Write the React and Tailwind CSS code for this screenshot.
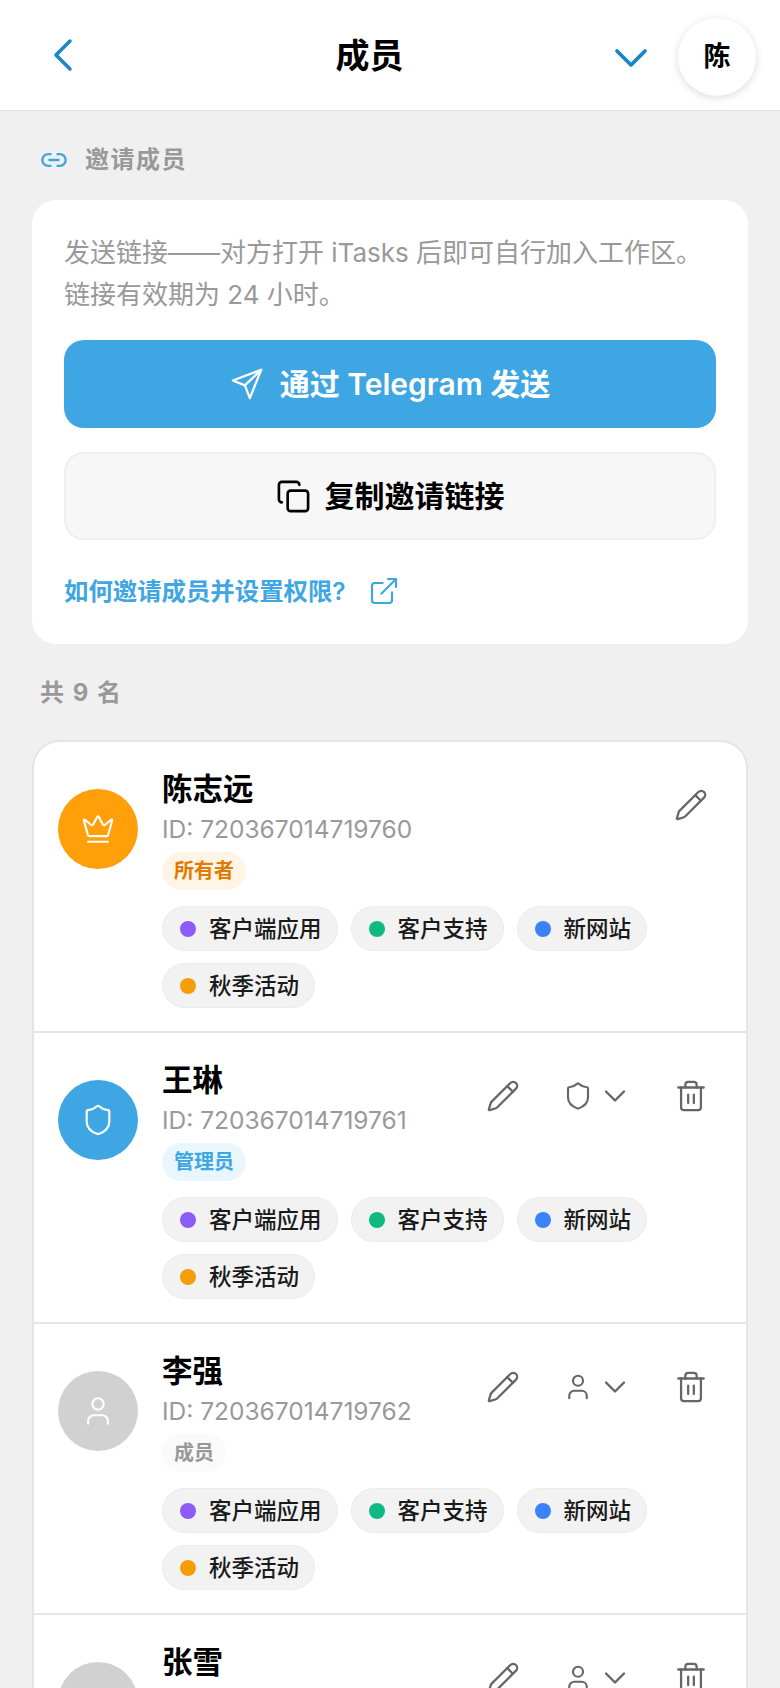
import {
  ChevronDown,
  ChevronLeft,
  Copy,
  Crown,
  ExternalLink,
  Link2,
  Pencil,
  Shield,
  Trash2,
  User,
} from "lucide-react";

const projects = [
  { name: "客户端应用", dot: "bg-[#8b5cf6]" },
  { name: "客户支持", dot: "bg-[#10b981]" },
  { name: "新网站", dot: "bg-[#3b82f6]" },
  { name: "秋季活动", dot: "bg-[#f59e0b]" },
];

const members = [
  { name: "陈志远", id: "720367014719760", role: "owner" },
  { name: "王琳", id: "720367014719761", role: "admin" },
  { name: "李强", id: "720367014719762", role: "member" },
  { name: "张雪", id: "720367014719763", role: "member" },
];

const roleStyles = {
  owner: { label: "所有者", avatar: "bg-[#ff9f0a]", badge: "bg-[#fff4e6] text-[#e07b00]", Icon: Crown },
  admin: { label: "管理员", avatar: "bg-[#3ea6e3]", badge: "bg-[#eaf6fd] text-[#3ea6e3]", Icon: Shield },
  member: { label: "成员", avatar: "bg-[#d1d1d1]", badge: "bg-[#fafafa] text-[#999999]", Icon: User },
};

function PlaneIcon() {
  return (
    <svg width="34" height="34" viewBox="0 0 24 24" fill="none" stroke="currentColor" strokeWidth="1.6" strokeLinejoin="round" strokeLinecap="round">
      <path d="M22 2 2 9.5l8.5 3.5 3.5 9z" />
      <path d="M22 2 10.5 13" />
    </svg>
  );
}

function SectionLabel({ children }) {
  return (
    <div className="flex h-[40px] items-center text-[24px] font-bold tracking-[1.5px] text-[#999999]">
      {children}
    </div>
  );
}

function MemberRow({ member }) {
  const role = roleStyles[member.role];
  const RoleIcon = role.Icon;
  const isOwner = member.role === "owner";

  return (
    <div className="border-b-2 border-[#e5e5e5] pt-[26px] pr-[38px] pb-[23px] pl-[24px]">
      <div className="flex items-center">
        <div className={`flex h-[80px] w-[80px] shrink-0 items-center justify-center rounded-full ${role.avatar}`}>
          <RoleIcon size={34} strokeWidth={1.5} className="text-white" />
        </div>

        <div className="ml-[24px] flex-1">
          <div className="h-[42px] text-[30.5px] leading-[42px] font-bold text-black">{member.name}</div>
          <div className="h-[38px] text-[24.5px] leading-[38px] text-[#999999]">ID: {member.id}</div>
          <div className={`mt-[4px] inline-flex h-[38px] items-center rounded-full px-[12px] text-[20px] font-semibold ${role.badge}`}>
            {role.label}
          </div>
        </div>

        <div className="mb-[49px] flex items-center text-[#666666]">
          <Pencil size={34} strokeWidth={1.6} />
          {!isOwner && (
            <>
              <div className="mr-[41px] ml-[43px] flex items-center gap-[4px]">
                <RoleIcon size={30} strokeWidth={1.7} />
                <ChevronDown size={36} strokeWidth={1.6} />
              </div>
              <Trash2 size={34} strokeWidth={1.6} />
            </>
          )}
        </div>
      </div>

      <div className="mt-[16px] ml-[104px] flex flex-wrap gap-x-[13px] gap-y-[12px]">
        {projects.map((project) => (
          <div
            key={project.name}
            className="flex h-[45px] items-center gap-[13px] rounded-full border border-[#ececec] bg-[#f2f2f2] pr-[15px] pl-[17px] text-[22.5px] font-medium text-[#1a1a1a]"
          >
            <span className={`h-[16px] w-[16px] rounded-full ${project.dot}`} />
            {project.name}
          </div>
        ))}
      </div>
    </div>
  );
}

export default function App() {
  return (
    <div className="h-[1688px] overflow-hidden bg-[#f0f0f0] font-['Inter','Noto_Sans_CJK_SC',sans-serif]">
      <header className="flex h-[111px] items-center border-b border-[#e2e2e2] bg-white pr-[24px] pl-[35px]">
        <ChevronLeft size={56} strokeWidth={1.5} className="text-[#1a85c8]" />
        <h1 className="flex-1 pl-[45px] text-center text-[34px] font-bold text-black">成员</h1>
        <ChevronDown size={56} strokeWidth={1.6} className="mt-[6px] mr-[19px] text-[#1a85c8]" />
        <div className="mt-[4px] flex h-[78px] w-[78px] items-center justify-center rounded-full bg-white text-[27px] font-bold text-black shadow-[0_2px_8px_rgba(0,0,0,0.14)]">
          陈
        </div>
      </header>

      <main className="px-[32px]">
        <div className="mt-[29px] ml-[8px]">
          <SectionLabel>
            <Link2 size={28} strokeWidth={2} className="mr-[17px] text-[#3ea6e3]" />
            邀请成员
          </SectionLabel>
        </div>

        <section className="mt-[20px] rounded-[24px] bg-white px-[32px] pt-[32px] pb-[35px]">
          <p className="text-[26px] leading-[42px] text-[#999999]">
            发送链接——对方打开 iTasks 后即可自行加入工作区。
            <br />
            链接有效期为 24 小时。
          </p>

          <button
            type="button"
            className="mt-[24px] flex h-[88px] w-full items-center justify-center gap-[16px] rounded-[20px] bg-[#3ea6e3] text-[30px] font-semibold text-white"
          >
            <PlaneIcon />
            通过 Telegram 发送
          </button>

          <button
            type="button"
            className="mt-[24px] flex h-[88px] w-full items-center justify-center gap-[14px] rounded-[20px] border-2 border-[#efefef] bg-[#f7f7f7] text-[30px] font-semibold text-black"
          >
            <Copy size={35} strokeWidth={1.8} />
            复制邀请链接
          </button>

          <div className="mt-[33px] flex h-[36px] items-center gap-[22px] text-[24.4px] font-semibold text-[#3ea6e3]">
            如何邀请成员并设置权限?
            <ExternalLink size={32} strokeWidth={1.6} />
          </div>
        </section>

        <div className="mt-[29px] ml-[8px]">
          <SectionLabel>共 9 名</SectionLabel>
        </div>

        <section className="mt-[27px] overflow-hidden rounded-[28px] border-2 border-[#e5e5e5] bg-white">
          {members.map((member) => (
            <MemberRow key={member.id} member={member} />
          ))}
        </section>
      </main>
    </div>
  );
}
